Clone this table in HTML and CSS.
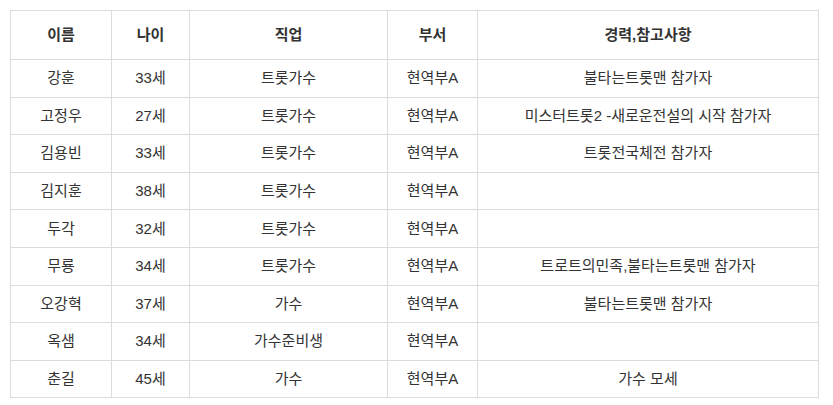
FILE: index.html
```html
<!DOCTYPE html>
<html lang="ko">
<head>
<meta charset="utf-8">
<link rel="stylesheet" href="styles.css">
</head>
<body>
<table class="roster">
  <colgroup>
    <col class="c-name"><col class="c-age"><col class="c-job"><col class="c-dept"><col class="c-note">
  </colgroup>
  <thead>
    <tr><th>이름</th><th>나이</th><th>직업</th><th>부서</th><th>경력,참고사항</th></tr>
  </thead>
  <tbody>
    <tr><td>강훈</td><td>33세</td><td>트롯가수</td><td>현역부A</td><td>불타는트롯맨 참가자</td></tr>
    <tr><td>고정우</td><td>27세</td><td>트롯가수</td><td>현역부A</td><td>미스터트롯2 -새로운전설의 시작 참가자</td></tr>
    <tr><td>김용빈</td><td>33세</td><td>트롯가수</td><td>현역부A</td><td>트롯전국체전 참가자</td></tr>
    <tr><td>김지훈</td><td>38세</td><td>트롯가수</td><td>현역부A</td><td></td></tr>
    <tr><td>두각</td><td>32세</td><td>트롯가수</td><td>현역부A</td><td></td></tr>
    <tr><td>무룡</td><td>34세</td><td>트롯가수</td><td>현역부A</td><td>트로트의민족,불타는트롯맨 참가자</td></tr>
    <tr><td>오강혁</td><td>37세</td><td>가수</td><td>현역부A</td><td>불타는트롯맨 참가자</td></tr>
    <tr><td>옥샘</td><td>34세</td><td>가수준비생</td><td>현역부A</td><td></td></tr>
    <tr><td>춘길</td><td>45세</td><td>가수</td><td>현역부A</td><td>가수 모세</td></tr>
  </tbody>
</table>
</body>
</html>
```
FILE: styles.css
```css
html, body {
  margin: 0;
  padding: 0;
  background: #fff;
}
body {
  padding: 10px;
  font-family: "Liberation Sans", "Noto Sans CJK KR", sans-serif;
  font-size: 15px;
  color: #333;
}
.roster {
  border-collapse: collapse;
  table-layout: fixed;
  width: 808px;
}
.c-name { width: 101px; }
.c-age { width: 78px; }
.c-job { width: 198px; }
.c-dept { width: 90px; }
.c-note { width: 341px; }
.roster th, .roster td {
  border: 1px solid #dcdcdc;
  text-align: center;
  vertical-align: middle;
  padding: 0 4px;
  line-height: 20px;
  white-space: nowrap;
}
.roster th {
  height: 48px;
  font-weight: bold;
  color: #333;
}
.roster td {
  height: 36.6px;
}
```
